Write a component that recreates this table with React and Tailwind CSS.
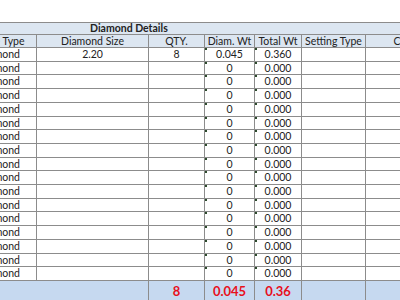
const COLS = 'grid grid-cols-[75px_112px_56px_50px_47px_64px_80px]'
const FONT = { fontFamily: 'Lato, "Liberation Sans", sans-serif' }

const rows = Array.from({ length: 17 }, (_, i) => ({
  tall: Math.round((i + 1) * 233 / 17) - Math.round(i * 233 / 17) === 14,
  size: i === 0 ? '2.20' : '',
  qty: i === 0 ? '8' : '',
  wt: i === 0 ? '0.045' : '0',
  total: i === 0 ? '0.360' : '0.000',
}))

function Tick() {
  return <span className="absolute left-0 top-0 w-[2px] h-[2px] bg-[#2d4a2d]" />
}

export default function App() {
  return (
    <div className="w-[400px] h-[300px] overflow-hidden bg-white text-[#222] text-[10.5px]" style={FONT}>
      <div className="h-[22px]" />
      <div className="ml-[-38px] w-[484px]">
        {/* Title */}
        <div className="h-[13px] border-y border-[#8c8c8c] bg-[#dce6f1] flex items-center pl-[128px] font-bold leading-none">
          Diamond Details
        </div>

        {/* Column headers */}
        <div className={`${COLS} h-[13px] bg-[#dce6f1] border-b border-[#8c8c8c] leading-none`}>
          <div className="border-r border-[#8c8c8c] flex items-center justify-center">Stone Type</div>
          <div className="border-r border-[#8c8c8c] flex items-center justify-center">Diamond Size</div>
          <div className="border-r border-[#8c8c8c] flex items-center justify-center">QTY.</div>
          <div className="border-r border-[#8c8c8c] flex items-center justify-center">Diam. Wt</div>
          <div className="border-r border-[#8c8c8c] flex items-center justify-center">Total Wt</div>
          <div className="border-r border-[#8c8c8c] flex items-center justify-center">Setting Type</div>
          <div className="flex items-center justify-center">Color</div>
        </div>

        {/* Data rows */}
        {rows.map((r, i) => (
          <div key={i} className={`${COLS} ${r.tall ? 'h-[14px]' : 'h-[13px]'} border-b border-[#8c8c8c] leading-none`}>
            <div className="border-r border-[#8c8c8c] flex items-center justify-center">Diamond</div>
            <div className="border-r border-[#8c8c8c] flex items-center justify-center">{r.size}</div>
            <div className="border-r border-[#8c8c8c] flex items-center justify-center">{r.qty}</div>
            <div className="relative border-r border-[#8c8c8c] flex items-center justify-center"><Tick />{r.wt}</div>
            <div className="relative border-r border-[#8c8c8c] flex items-center justify-center"><Tick />{r.total}</div>
            <div className="border-r border-[#8c8c8c]" />
            <div />
          </div>
        ))}

        {/* Totals */}
        <div className={`${COLS} h-[20px] bg-[#c6d9f0] text-[#e8101c] font-bold text-[13px] leading-none`}>
          <div />
          <div className="border-r border-[#8c8c8c]" />
          <div className="border-r border-[#8c8c8c] flex items-center justify-center">8</div>
          <div className="border-r border-[#8c8c8c] flex items-center justify-center">0.045</div>
          <div className="border-r border-[#8c8c8c] flex items-center justify-center">0.36</div>
          <div className="border-r border-[#8c8c8c]" />
          <div />
        </div>
      </div>
    </div>
  )
}
